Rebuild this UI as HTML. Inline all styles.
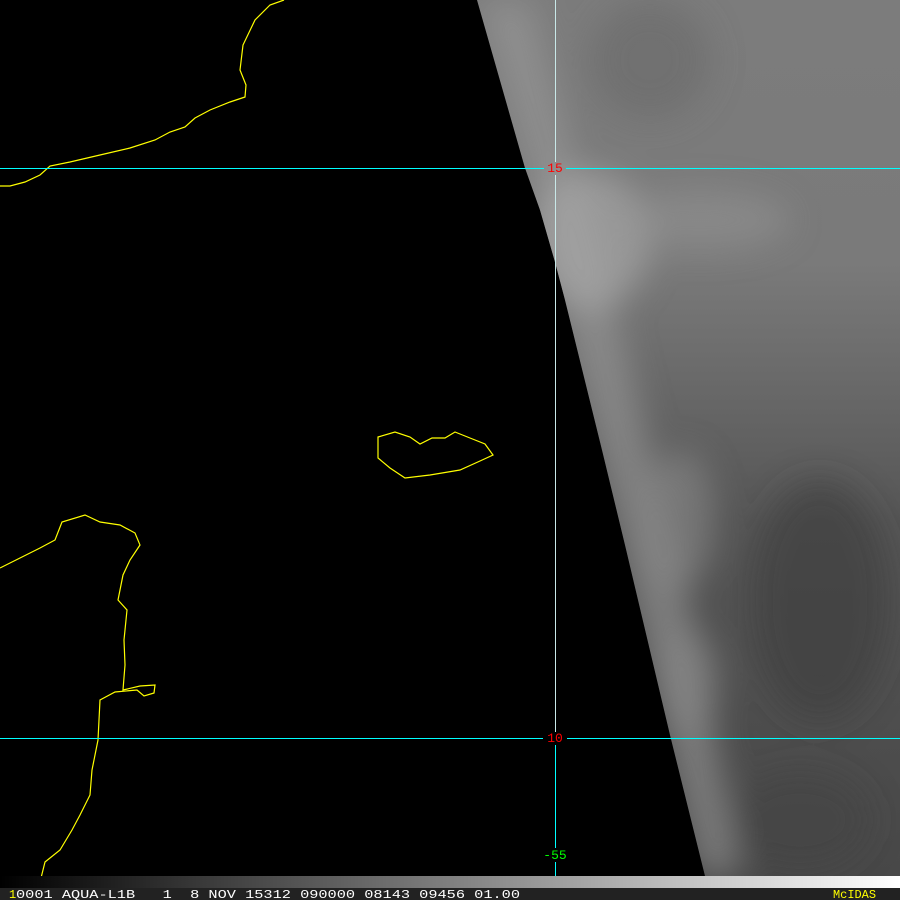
<!DOCTYPE html>
<html><head><style>
html,body{margin:0;padding:0;background:#000;width:900px;height:900px;overflow:hidden}
svg{display:block}
text{font-family:"Liberation Mono",monospace;white-space:pre}
</style></head><body>
<svg width="900" height="900" viewBox="0 0 900 900" xmlns="http://www.w3.org/2000/svg">
<defs>
<linearGradient id="gv" x1="0" y1="0" x2="0" y2="1">
<stop offset="0" stop-color="#7c7c7c"/>
<stop offset="0.3" stop-color="#7a7a7a"/>
<stop offset="0.6" stop-color="#555"/>
<stop offset="1" stop-color="#484848"/>
</linearGradient>
<linearGradient id="bar" x1="0" y1="0" x2="1" y2="0">
<stop offset="0" stop-color="#000"/>
<stop offset="1" stop-color="#fff"/>
</linearGradient>
<clipPath id="cp"><polygon points="477,0 900,0 900,876 705,876 670,735 625,545 602,450 565,300 555,262 540,210 525,168"/></clipPath>
<filter id="bl" x="-50%" y="-50%" width="200%" height="200%"><feGaussianBlur stdDeviation="16"/></filter>
</defs>
<rect width="900" height="900" fill="#000"/>
<polygon points="477,0 900,0 900,876 705,876 670,735 625,545 602,450 565,300 555,262 540,210 525,168" fill="url(#gv)"/>
<g clip-path="url(#cp)">
<g filter="url(#bl)">
<polygon points="477,0 530,0 600,250 650,450 700,650 740,876 700,876 540,210" fill="#9a9a9a" opacity="0.6"/>
<ellipse cx="590" cy="240" rx="60" ry="70" fill="#ababab" opacity="0.6"/>
<ellipse cx="700" cy="220" rx="90" ry="30" fill="#959595" opacity="0.5"/>
<ellipse cx="680" cy="520" rx="35" ry="70" fill="#8a8a8a" opacity="0.6"/>
<ellipse cx="690" cy="680" rx="30" ry="50" fill="#8a8a8a" opacity="0.5"/>
<ellipse cx="820" cy="600" rx="70" ry="120" fill="#3c3c3c" opacity="0.6"/>
<ellipse cx="800" cy="820" rx="70" ry="50" fill="#404040" opacity="0.5"/>
<ellipse cx="650" cy="60" rx="60" ry="60" fill="#6a6a6a" opacity="0.6"/>
</g>
</g>
<g fill="none" stroke="#ffff00" stroke-width="1.2">
<polyline points="284,0 270,5 255,20 243,45 240,70 246,85 245,97 230,102 210,110 195,118 185,127 170,132 155,140 130,148 100,155 70,162 50,166 40,175 25,182 10,186 0,186"/>
<path d="M378,437 L395,432 L410,437 L420,444 L432,438 L445,438 L455,432 L470,438 L485,444 L493,455 L480,461 L460,470 L430,475 L405,478 L390,468 L378,458 Z"/>
<polyline points="0,568 20,558 40,548 55,540 62,522 85,515 100,522 120,525 135,533 140,545 130,560 123,575 118,600 127,610 124,640 125,665 123,690 140,686 155,685 154,693 144,696 137,690 115,692 100,700 98,740 92,770 90,795 80,815 72,830 60,850 45,862 40,882"/>
</g>
<g stroke="#00ffff" stroke-width="1">
<line x1="0" y1="168.5" x2="544" y2="168.5"/>
<line x1="566" y1="168.5" x2="900" y2="168.5"/>
<line x1="0" y1="738.5" x2="543" y2="738.5"/>
<line x1="567" y1="738.5" x2="900" y2="738.5"/>
</g>
<line x1="555.5" y1="0" x2="555.5" y2="162" stroke="#c8e8e8" stroke-width="1"/>
<line x1="555.5" y1="175" x2="555.5" y2="732" stroke="#c8e8e8" stroke-width="1"/>
<line x1="555.5" y1="745" x2="555.5" y2="848" stroke="#00ffff" stroke-width="1"/>
<line x1="555.5" y1="862" x2="555.5" y2="888" stroke="#00ffff" stroke-width="1"/>
<text x="555" y="172" fill="#ff0000" font-size="13" text-anchor="middle">15</text>
<text x="555" y="742" fill="#ff0000" font-size="13" text-anchor="middle">10</text>
<text x="555" y="859" fill="#00ff00" font-size="13" text-anchor="middle">-55</text>
<rect x="0" y="876" width="900" height="12" fill="url(#bar)"/>
<rect x="0" y="888" width="900" height="12" fill="#222"/>
<text x="9" y="898" fill="#ffff00" font-size="12">1</text>
<text x="16" y="898" fill="#fff" font-size="12" textLength="504" lengthAdjust="spacingAndGlyphs" xml:space="preserve">0001 AQUA-L1B   1  8 NOV 15312 090000 08143 09456 01.00</text>
<text x="833" y="898" fill="#ffff00" font-size="12" textLength="43" lengthAdjust="spacingAndGlyphs">McIDAS</text>
</svg>
</body></html>
